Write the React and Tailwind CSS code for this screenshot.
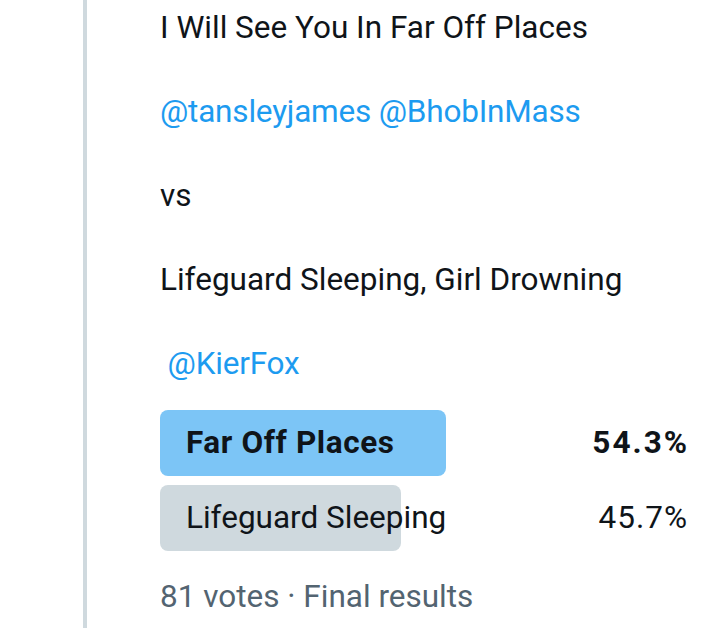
const LINES = [
  { text: "I Will See You In Far Off Places" },
  { text: "" },
  { text: "@tansleyjames @BhobInMass", link: true },
  { text: "" },
  { text: "vs" },
  { text: "" },
  { text: "Lifeguard Sleeping, Girl Drowning" },
  { text: "" },
  { text: "\u00a0@KierFox", link: true },
];

const CHOICES = [
  { label: "Far Off Places", pct: 54.3, winner: true },
  { label: "Lifeguard Sleeping", pct: 45.7 },
];

export default function App() {
  return (
    <div
      className="w-[720px] h-[628px] bg-white overflow-hidden flex text-[#0f1419] text-[31.5px] leading-[42px]"
      style={{ fontFamily: "Roboto, 'Liberation Sans', sans-serif" }}
    >
      <div className="w-[83px] shrink-0" />
      <div className="w-[4px] shrink-0 bg-[#cfd9de]" />
      <div className="pl-[73px] w-[600px] shrink-0 pt-[7px]">
        {LINES.map((l, i) => (
          <div key={i} className={"h-[42px] whitespace-pre " + (l.link ? "text-[#1d9bf0] tracking-[-0.2px]" : "")}>
            {l.text}
          </div>
        ))}

        <div className="w-[527px] mt-[25px] flex flex-col gap-[9px]">
          {CHOICES.map((c) => (
            <div key={c.label} className="relative h-[66px] flex items-center justify-between">
              <div
                className={
                  "absolute left-0 top-0 bottom-0 rounded-[8px] " +
                  (c.winner ? "bg-[#7cc5f6]" : "bg-[#cfd9de]")
                }
                style={{ width: `${c.pct}%` }}
              />
              <span className={"relative pl-[26px] " + (c.winner ? "font-bold tracking-[0.6px]" : "")}>
                {c.label}
              </span>
              <span className={"relative " + (c.winner ? "font-bold tracking-[2px] -mr-[2px]" : "tracking-[1px] -mr-[1px]")}>
                {c.pct}%
              </span>
            </div>
          ))}
        </div>

        <div className="mt-[25px] text-[#536471]">81 votes · Final results</div>
      </div>
    </div>
  );
}
